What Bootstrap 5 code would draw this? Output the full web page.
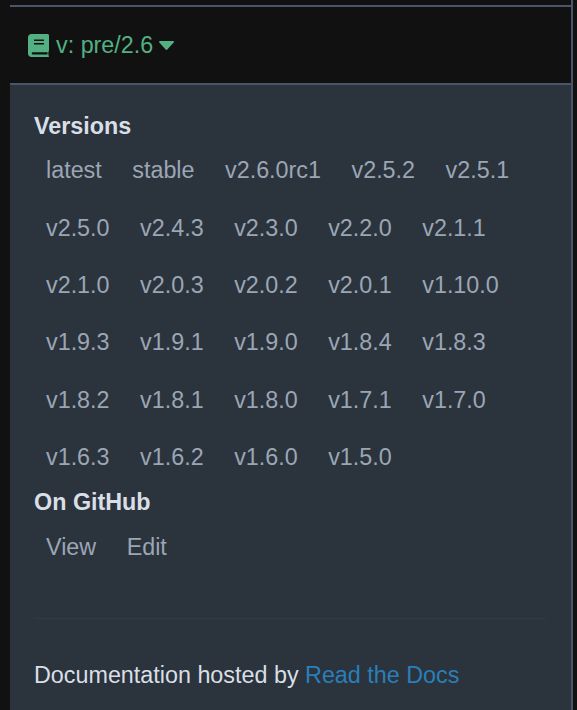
<!DOCTYPE html>
<html lang="en">
<head>
<meta charset="utf-8">
<title>Versions</title>
<link href="https://cdn.jsdelivr.net/npm/bootstrap@5.3.0/dist/css/bootstrap.min.css" rel="stylesheet">
<style>
html, body { height: 100%; }
body { background: #111; font-family: "Liberation Sans", Arial, sans-serif; font-size: 23.33px; overflow: hidden; }
.rtd-shell { width: 573px; height: 710px; padding-left: 10px; }
.rtd-inner { border-right: 2px solid #4b5568; padding-top: 5px; height: 710px; }
.rtd-current { height: 78px; border-top: 2px solid #4b5568; color: #52b083; padding-left: 18px; }
.rtd-current svg.bookicon { width: 21px; height: 23px; margin-right: 7px; }
.rtd-current svg.caret { width: 15px; height: 9px; margin-left: 6px; }
.rtd-panel { background: #2b333d; border-top: 2px solid #4b5568; height: 627px; padding: 25px 25px 0 24px; color: #d9dfe6; }
.rtd-title { font-weight: 700; line-height: 33px; height: 33px; }
.rtd-title-first { margin-bottom: -.7px; }
.rtd-links { display: flex; flex-wrap: wrap; row-gap: 24.33px; padding: 12px 0 12.5px; }
.rtd-links a { color: #9ba6b5; text-decoration: none; padding: 0 12px; margin-right: 6.5px; line-height: 33px; height: 33px; display: block; }
.rtd-rule { border-top: 1px solid #323a44; margin: 40.7px 0 40px; opacity: 1; }
.rtd-foot { line-height: 33px; }
.rtd-foot a { color: #2b7fb8; text-decoration: none; }
</style>
</head>
<body>
<div class="rtd-shell">
 <div class="rtd-inner">
  <div class="rtd-current d-flex align-items-center">
    <svg class="bookicon" viewBox="0 0 21 23"><path fill="#52b083" d="M3.500 0H19.500C20.400 0 21 .6 21 1.500V16.500C21 17 20.800 17.400 20.400 17.700V21.300C20.800 21.500 21 21.800 21 22.200 21 22.700 20.700 23 20.200 23H3.500C1.500 23 0 21.500 0 19.500V3.500C0 1.500 1.500 0 3.500 0Z"/><path fill="#111" d="M6 5.500H16V7H6ZM6 9H16V10.500H6ZM4.500 18.300H19.500V20.400H4.500C3.500 20.400 3.500 18.300 4.500 18.300Z"/></svg>
    <span>v: pre/2.6</span>
    <svg class="caret" viewBox="0 0 15 9"><path fill="#52b083" d="M1 0H14C15 0 15.300 1 14.700 1.600L8.300 8.500C7.800 9 7.200 9 6.700 8.500L.3 1.600C-.3 1 0 0 1 0Z"/></svg>
  </div>
  <div class="rtd-panel">
    <div class="rtd-title rtd-title-first">Versions</div>
    <div class="rtd-links">
      <a href="#">latest</a><a href="#">stable</a><a href="#">v2.6.0rc1</a><a href="#">v2.5.2</a><a href="#">v2.5.1</a>
      <a href="#">v2.5.0</a><a href="#">v2.4.3</a><a href="#">v2.3.0</a><a href="#">v2.2.0</a><a href="#">v2.1.1</a>
      <a href="#">v2.1.0</a><a href="#">v2.0.3</a><a href="#">v2.0.2</a><a href="#">v2.0.1</a><a href="#">v1.10.0</a>
      <a href="#">v1.9.3</a><a href="#">v1.9.1</a><a href="#">v1.9.0</a><a href="#">v1.8.4</a><a href="#">v1.8.3</a>
      <a href="#">v1.8.2</a><a href="#">v1.8.1</a><a href="#">v1.8.0</a><a href="#">v1.7.1</a><a href="#">v1.7.0</a>
      <a href="#">v1.6.3</a><a href="#">v1.6.2</a><a href="#">v1.6.0</a><a href="#">v1.5.0</a>
    </div>
    <div class="rtd-title">On GitHub</div>
    <div class="rtd-links"><a href="#">View</a><a href="#">Edit</a></div>
    <hr class="rtd-rule">
    <div class="rtd-foot">Documentation hosted by <a href="#">Read the Docs</a></div>
  </div>
 </div>
</div>
<script src="https://cdn.jsdelivr.net/npm/bootstrap@5.3.0/dist/js/bootstrap.bundle.min.js"></script>
</body>
</html>
